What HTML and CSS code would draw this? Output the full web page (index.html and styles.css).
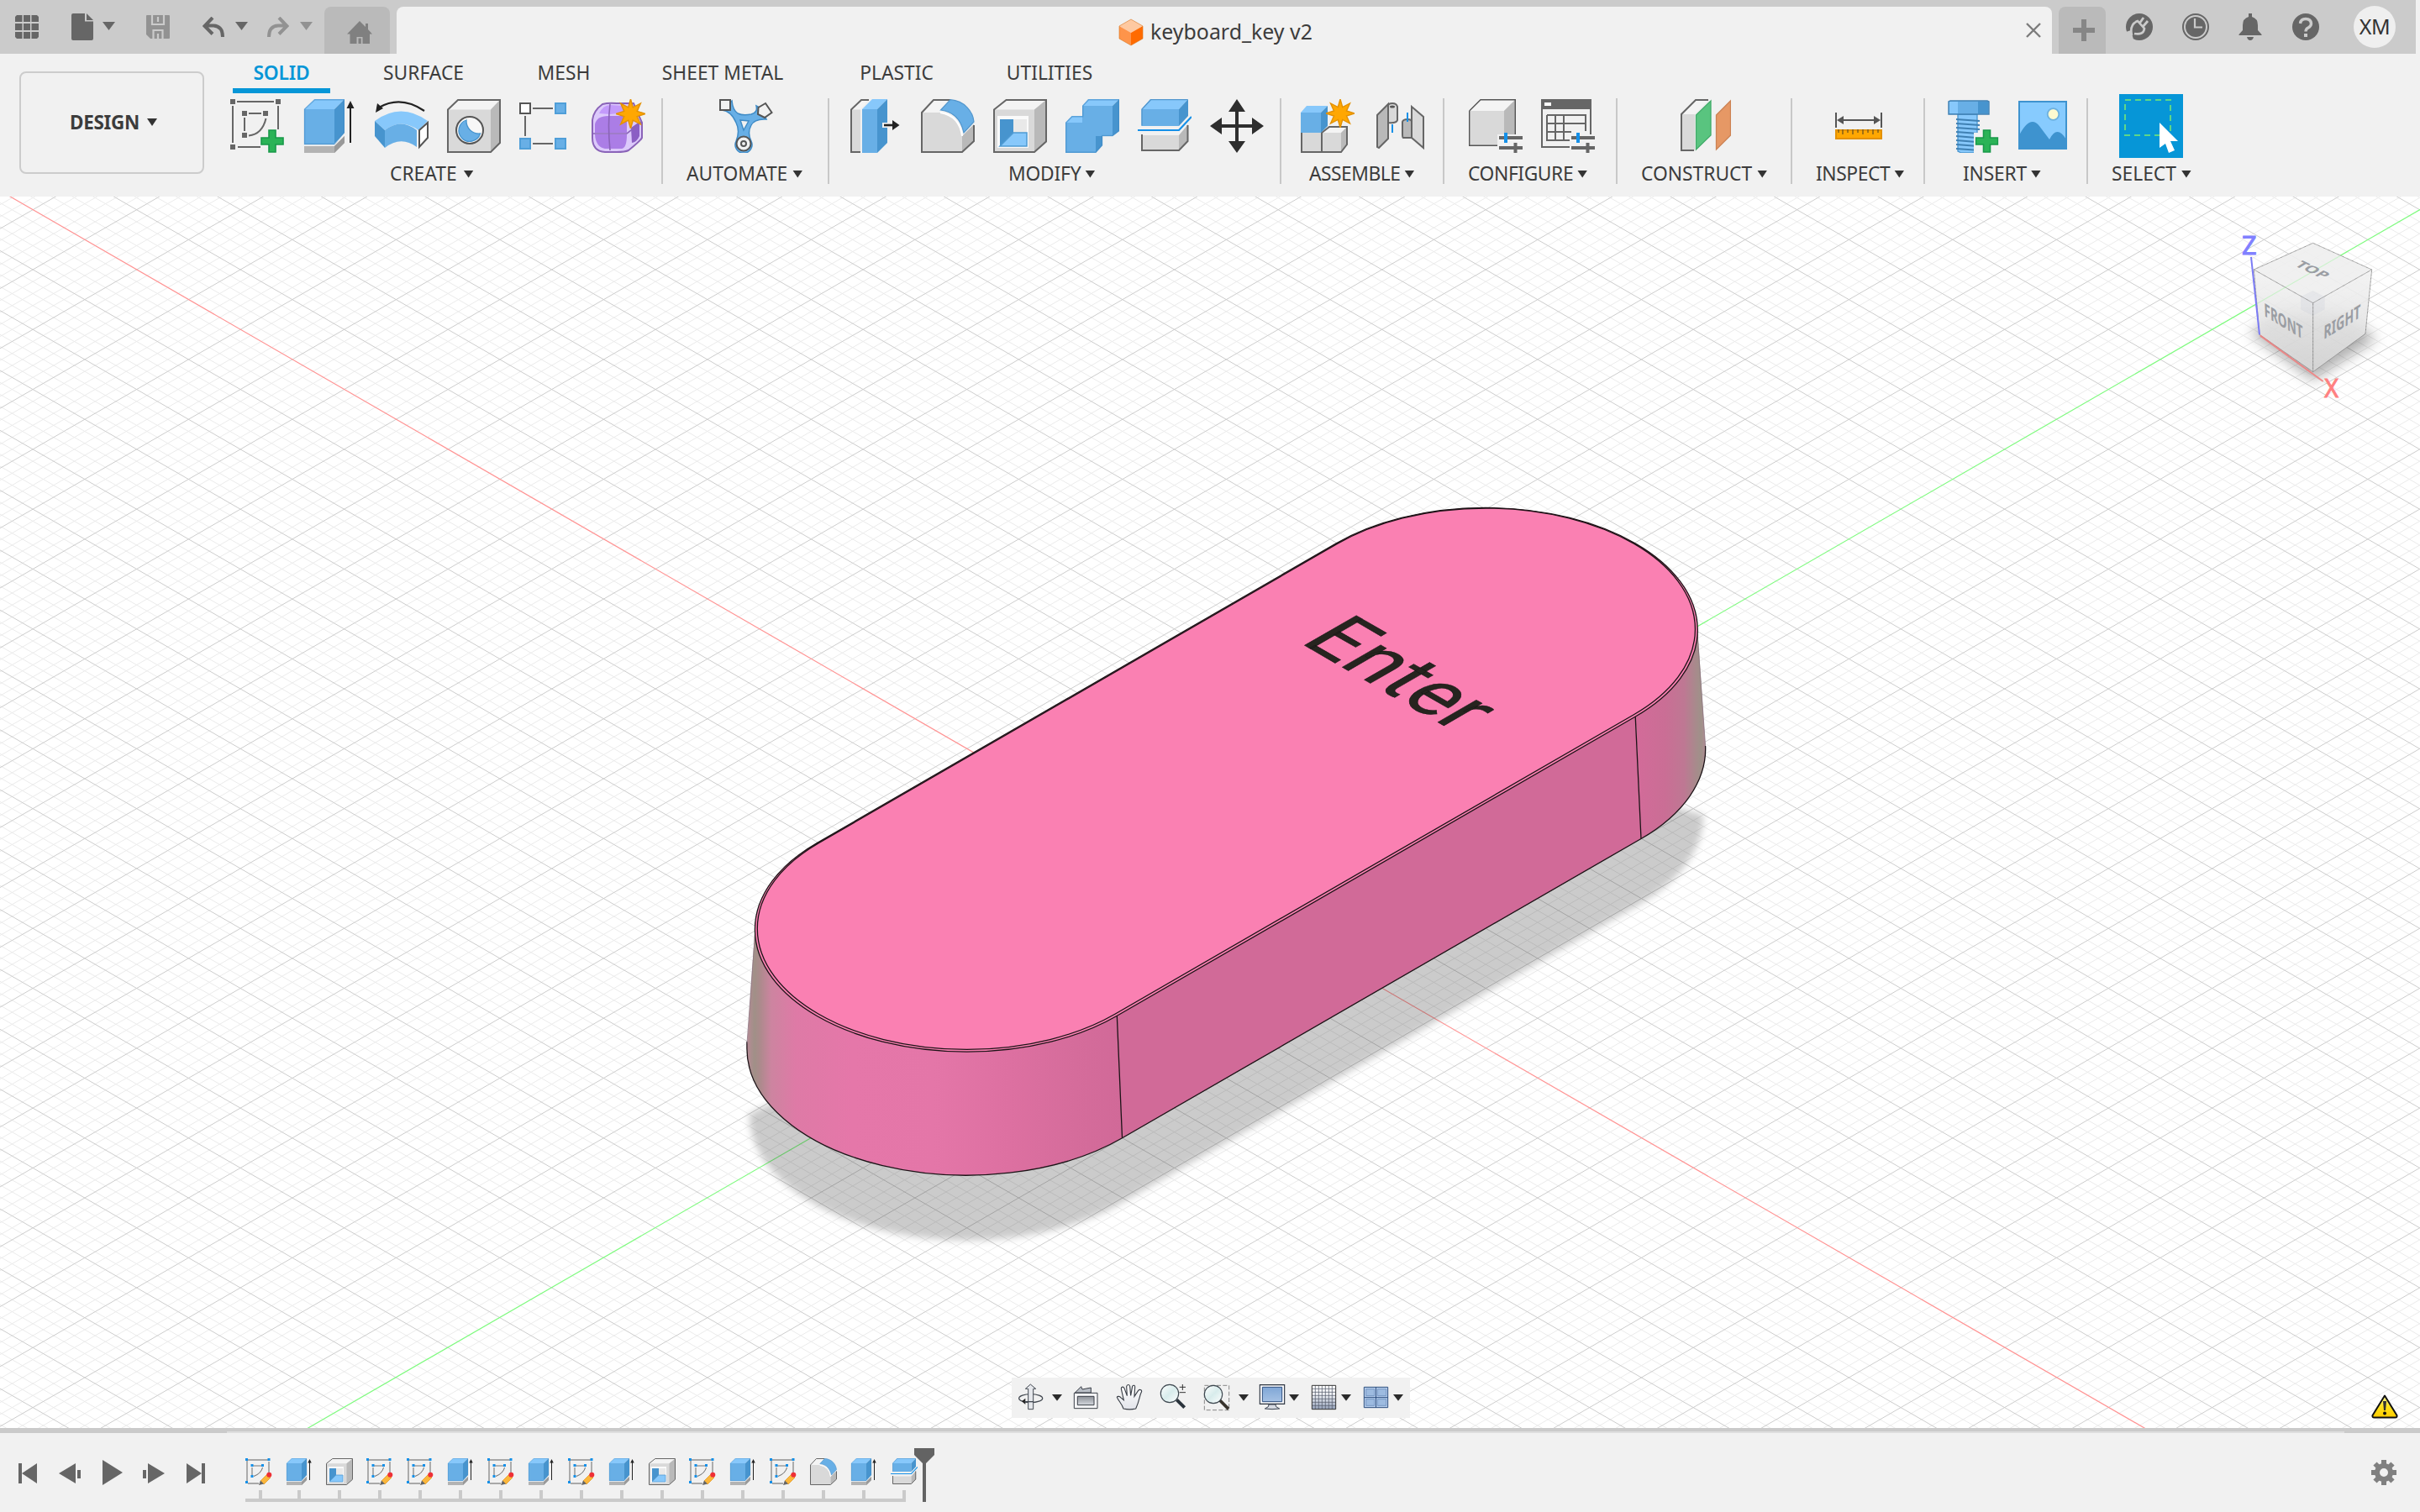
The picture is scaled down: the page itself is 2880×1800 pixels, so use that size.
FILE: index.html
```html
<!DOCTYPE html>
<html lang="en">
<head>
<meta charset="utf-8">
<title>keyboard_key v2</title>
<link rel="stylesheet" href="styles.css">
</head>
<body>
<svg class="defs" width="0" height="0" aria-hidden="true">
  <defs>
    <linearGradient id="gLens" x1="0" y1="0" x2="1" y2="1"><stop offset="0" stop-color="#fff"/><stop offset=".5" stop-color="#d8ecec"/><stop offset="1" stop-color="#fff"/></linearGradient>
    <linearGradient id="gBlue" x1="0" y1="0" x2="0" y2="1"><stop offset="0" stop-color="#7fa6d6"/><stop offset="1" stop-color="#a5c1e4"/></linearGradient>
    <linearGradient id="gGrid" x1="0" y1="0" x2="0" y2="1"><stop offset="0" stop-color="#fff"/><stop offset=".4" stop-color="#eef0f4"/><stop offset="1" stop-color="#93a0b8"/></linearGradient>
    <linearGradient id="gGray" x1="0" y1="0" x2="0" y2="1"><stop offset="0" stop-color="#8b8f96"/><stop offset="1" stop-color="#d5d8de"/></linearGradient>
    <linearGradient id="gHand" x1="0" y1="0" x2="0" y2="1"><stop offset="0" stop-color="#fff"/><stop offset="1" stop-color="#e2e4ea"/></linearGradient>
    <linearGradient id="gWarn" x1="0" y1="0" x2="0" y2="1"><stop offset="0" stop-color="#fff7a0"/><stop offset=".5" stop-color="#ffe21a"/><stop offset="1" stop-color="#ffcc00"/></linearGradient>
    <symbol id="extrude" viewBox="0 0 64 64">
      <path d="M2 56H38L50 44V52L38 64H2Z" fill="#b3b3b3"/><path d="M38 56L50 44V52L38 64Z" fill="#999"/>
      <path d="M2 12H38V54H2Z" fill="#68afe6"/><path d="M2 12L14.500 0H50L38 12Z" fill="#87c8fb"/><path d="M38 12L50 0V40L38 53Z" fill="#4794ce"/>
      <path d="M2.500 53.500V12L14.500 .700H49.300V40L38 53.500Z" fill="none" stroke="#3f8bc6" stroke-opacity=".55" stroke-width="1.400"/>
      <path d="M57 2L61.500 11H58V52H56V11H52.500Z" fill="#222"/>
    </symbol>
    <symbol id="shell" viewBox="0 0 64 64">
      <path d="M1 12.500L15.500 1H63V50.500L49 63H1Z" fill="#d9d9d9"/><path d="M1 12.500L15.500 1H63L49 12.500Z" fill="#f4f4f4"/><path d="M49 12.500L63 1V50.500L49 63Z" fill="#b9b9b9"/>
      <path d="M5 20H42V58H5Z" fill="#fafafa"/><path d="M24 24H40V40H24Z" fill="#e9e9e9"/><path d="M8 24H24V40L8 56Z" fill="#4794ce"/><path d="M24 40H40V56H8Z" fill="#87c8fb" stroke="#4d9ad3" stroke-width="1.500"/>
      <path d="M1 12.500L15.500 1H63V50.500L49 63H1Z" fill="none" stroke="#666" stroke-width="2"/>
    </symbol>
    <symbol id="fillet" viewBox="0 0 64 64">
      <path d="M1 16L15 1H33L23 16Z" fill="#f4f4f4"/><path d="M1 16H23Q46 20 49 44V63H1Z" fill="#d9d9d9"/><path d="M49 44L63 30V50L49 63Z" fill="#b9b9b9"/>
      <path d="M23 16Q46 20 49 44L49 44" fill="none" stroke="#fff" stroke-width="2"/>
      <path d="M35 1H15L1 16V63H49L63 50V31" fill="none" stroke="#666" stroke-width="2"/>
      <path d="M23.500 13L35 .700C52 2 62 15 63 27L51 40C48 26 40 15 23.500 13Z" fill="#68afe6" stroke="#5196cd" stroke-width="1.200"/>
    </symbol>
    <symbol id="split" viewBox="0 0 64 64">
      <path d="M5 43H49V61H5Z" fill="#d9d9d9"/><path d="M49 43L60 30V50L49 61Z" fill="#b9b9b9"/><path d="M5 42V61H49L59.500 50V31" fill="none" stroke="#666" stroke-width="2"/>
      <path d="M4.500 12H49V32H4.500Z" fill="#68afe6"/><path d="M4.500 12L15 0H60L49 12Z" fill="#87c8fb"/><path d="M49 12L60 0V20L49 32Z" fill="#4794ce"/>
      <path d="M5 31.500V12L15.500 .700H59.500" fill="none" stroke="#5196cd" stroke-width="1.300"/>
      <path d="M0 37H49L64 21" fill="none" stroke="#1590e8" stroke-width="2.200"/>
    </symbol>
    <symbol id="star" viewBox="0 0 34 34">
      <path d="M17 0L19.700 9.500L28.500 5L24.500 14L34 17L24.500 20L28.500 29L19.700 24.500L17 34L14.300 24.500L5.500 29L9.500 20L0 17L9.500 14L5.500 5L14.300 9.500Z" fill="#ffa702" stroke="#e39103" stroke-width="1.400"/>
    </symbol>
    <symbol id="plus" viewBox="0 0 28 28">
      <path d="M10 1H18V10H27V18H18V27H10V18H1V10H10Z" fill="#2bb357" stroke="#18994a" stroke-width="1.600"/>
    </symbol>
    <symbol id="sketch" viewBox="0 0 32 32">
      <path d="M3 2H27M3 30H16" stroke="#a8a8a8" stroke-width="2"/><path d="M2 3V28M28 4V17" stroke="#666" stroke-width="1"/>
      <path d="M9 9H19M8 11V20M20.500 11Q19 18 10 21.500" stroke="#777" fill="none" stroke-width="1.100"/>
      <path d="M0 0H3V3H0ZM26.500 0H29.500V3H26.500ZM0 27H3V30H0ZM6.500 7H9.500V10H6.500ZM19 7H22V10H19ZM6.500 20H9.500V23H6.500Z" fill="#1590e8"/>
      <path d="M18 27L26 19L30 23L22 31Z" fill="#fbb73c" stroke="#e69a25" stroke-width=".8"/><path d="M18 26.500L22 30.500L16 32Z" fill="#666"/><circle cx="28.300" cy="19.700" r="3" fill="#ee2f36"/>
    </symbol>
  </defs>
</svg>

<div class="app">
  <header class="titlebar">
    <div class="quick">
      <svg class="q-grid" width="28" height="28" viewBox="0 0 28 28"><path d="M2 0H8.500V8H0V2ZM10 0H18V8H10ZM19.500 0H26L28 2V8H19.500ZM0 10H8.500V18H0ZM10 10H18V18H10ZM19.500 10H28V18H19.500ZM0 20H8.500V28H2L0 26ZM10 20H18V28H10ZM19.500 20H28V26L26 28H19.500Z" fill="#666"/></svg>
      <svg class="q-file" width="26" height="32" viewBox="0 0 26 32"><path d="M2 0H16V9.500H26V30Q26 32 24 32H2Q0 32 0 30V2Q0 0 2 0ZM18 0L26 8H18Z" fill="#666"/></svg>
      <i class="caret big"></i>
      <svg class="q-save" width="28" height="28" viewBox="0 0 28 28"><path d="M1 0H27Q28 0 28 1V27Q28 28 27 28H5L0 23V1Q0 0 1 0Z" fill="#929292"/><path d="M7 0V11H21V0M8.500 28V18H19.500V28M14 2V8M14 22V28" fill="none" stroke="#cbcbcb" stroke-width="2.200"/></svg>
      <svg class="q-undo" width="26" height="25" viewBox="0 0 26 25"><path d="M12 1L2.500 11L12 20.500M3 10.500H13Q24 11 24 24" fill="none" stroke="#666" stroke-width="4"/></svg>
      <i class="caret big"></i>
      <svg class="q-redo" width="26" height="25" viewBox="0 0 26 25"><path d="M14 1L23.500 11L14 20.500M23 10.500H13Q2 11 2 24" fill="none" stroke="#929292" stroke-width="4"/></svg>
      <i class="caret big light"></i>
    </div>
    <div class="home-tab"><svg width="30" height="28" viewBox="0 0 30 28"><path d="M15 0L22 7V3H25V10L30 15.500H27V27H18.500V19H11.500V27H3.500V15.500H0ZM13.500 20.500H16.800V27H13.500Z" fill="#808080" fill-rule="evenodd"/></svg></div>
    <div class="doc-tab">
      <svg class="doc-cube" width="30" height="33" viewBox="0 0 30 33"><path d="M15 1L29 9L15 17L1 9Z" fill="#fec9a1"/><path d="M1 9L15 17V32L1 24Z" fill="#fe944a"/><path d="M29 9L15 17V32L29 24Z" fill="#ff6b00"/><path d="M15 1L29 9V24L15 32L1 24V9Z" fill="none" stroke="#d9771f" stroke-opacity=".6"/></svg>
      <span class="doc-name">keyboard_key v2</span>
      <svg class="doc-close" width="18" height="18" viewBox="0 0 18 18"><path d="M1 1L17 17M17 1L1 17" stroke="#7c7c7c" stroke-width="2.400"/></svg>
    </div>
    <div class="new-tab"><svg width="26" height="26" viewBox="0 0 26 26"><path d="M13 0V26M0 13H26" stroke="#868686" stroke-width="6"/></svg></div>
    <div class="account">
      <svg width="32" height="32" viewBox="0 0 32 32"><circle cx="16" cy="16" r="16" fill="#666"/><path d="M0 22L6 20L9 31L4 30Z" fill="#cbcbcb"/><path d="M7 26Q4 13 14 9L22 18Q21 26 10 24" fill="none" stroke="#cbcbcb" stroke-width="2.600"/><path d="M16 12L21 5M20 16L26 9" fill="none" stroke="#cbcbcb" stroke-width="2.800"/></svg>
      <svg width="34" height="34" viewBox="0 0 34 34"><circle cx="17" cy="17" r="15" fill="none" stroke="#666" stroke-width="2"/><circle cx="17" cy="17" r="12" fill="#666"/><path d="M16 7V17.500H25" fill="none" stroke="#cbcbcb" stroke-width="2.200"/></svg>
      <svg width="28" height="32" viewBox="0 0 28 32"><path d="M12 0H16V4Q23 6 23 14V20L27.500 25V26H.5V25L5 20V14Q5 6 12 4ZM10 28H18Q17 32 14 32T10 28Z" fill="#666"/></svg>
      <svg class="help" width="32" height="32" viewBox="0 0 32 32"><circle cx="16" cy="16" r="16" fill="#666"/><path d="M9.500 12Q10 6.500 16 6.500T22.500 12Q22.500 15 19 17Q16 18.500 16 21.500" fill="none" stroke="#cbcbcb" stroke-width="3.400"/><path d="M14 24H18V28H14Z" fill="#cbcbcb"/></svg>
      <span class="avatar">XM</span>
    </div>
  </header>

  <section class="ribbon">
    <div class="workspace">DESIGN<i class="caret"></i></div>
    <div class="ribbon-main">
      <nav class="tabs">
        <span class="tab active">SOLID</span><span class="tab t2">SURFACE</span><span class="tab t3">MESH</span><span class="tab t4">SHEET METAL</span><span class="tab t5">PLASTIC</span><span class="tab t6">UTILITIES</span>
      </nav>
      <div class="panels">
        <div class="panel create">
          <div class="icons">
            <svg viewBox="0 0 64 64"><path d="M0 0H6V6H0ZM54 0H60V6H54ZM0 54H6V60H0ZM14 14H20V20H14ZM39 14H45V20H39ZM14 40H20V46H14Z" fill="#666"/><path d="M8 3H52M3 8V52M57 8V36M9 57H36M22 17H37M17 22V38M42.500 23Q38 42 22 43.500" fill="none" stroke="#666" stroke-width="2"/><use href="#plus" x="36" y="36" width="28" height="28"/></svg>
            <svg><use href="#extrude"/></svg>
            <svg viewBox="0 0 64 64"><path d="M0 26Q31 3 63 26L52 37Q31 22 12 37Z" fill="#87c8fb"/><path d="M12 37Q31 22 50 37V57Q31 43 12 58Z" fill="#68afe6"/><path d="M0 26L12 37V58L0 44Z" fill="#4794ce"/><path d="M53 37L63 28V46L53 57Z" fill="#fff" stroke="#555" stroke-width="2"/><path d="M59 14Q31-5 5 10" fill="none" stroke="#222" stroke-width="2.200"/><path d="M1 16L3 5L10 11Z" fill="#222"/></svg>
            <svg viewBox="0 0 64 64"><path d="M1 12.500L13 1H63V52L52 63H1Z" fill="#d9d9d9"/><path d="M1 12.500L13 1H63L52 12.500Z" fill="#f4f4f4"/><path d="M52 12.500L63 1V52L52 63Z" fill="#b9b9b9"/><path d="M1 12.500L13 1H63V52L52 63H1Z" fill="none" stroke="#666" stroke-width="2"/><circle cx="27" cy="37" r="16" fill="#f7f7f7" stroke="#555" stroke-width="2"/><path d="M23 25A13 13 0 1 0 39.500 41A15 15 0 0 1 23 25Z" fill="#68afe6" stroke="#4794ce" stroke-width="1.300"/></svg>
            <svg viewBox="0 0 64 64"><path d="M16 11H40M16 53H40M7 20V44" stroke="#666" stroke-width="2"/><path d="M1 5H13V17H1Z" fill="#fff" stroke="#555" stroke-width="2"/><path d="M43 5H55V17H43ZM1 47H13V59H1ZM43 47H55V59H43Z" fill="#68afe6" stroke="#4f9ed8" stroke-width="2"/></svg>
            <svg viewBox="0 0 64 64"><path d="M1 25Q2 14 13 6Q20 4 30 5H50L60 28V46Q58 50 44 61Q40 63 30 63H16Q1 62 1 46Z" fill="#dcc9fb" stroke="#8a63b8" stroke-width="2"/><path d="M9 17Q14 7 22 7L40 8V16L22 18Z" fill="#c39afb"/><path d="M4 30Q6 20 20 20H42V40H4Z" fill="#ab7de6"/><path d="M4 42H42Q42 58 36 59H16Q5 57 4 42Z" fill="#ab7de6"/><path d="M47 34L57 27V44Q54 51 48 52Z" fill="#8b5fc4"/><path d="M22 6Q19 30 22 61M1 41H42L60 27" fill="none" stroke="#8a63b8" stroke-width="1.600"/><use href="#star" x="29" y="0" width="35" height="35"/></svg>
          </div>
          <div class="label">CREATE<i class="caret"></i></div>
        </div>
        <div class="panel automate">
          <div class="icons">
            <svg viewBox="0 0 64 64"><path d="M3 13Q14 14 20 28Q25 38 20 50A10 10 0 1 0 38 50Q33 40 38 31Q42 23 56 24L48 10L44 8Q46 16 38 18Q28 20 22 17Q16 13 15 2Z" fill="#68afe6" stroke="#3f8bc6" stroke-width="1.500"/><path d="M25 25L35 26L29 37Z" fill="#f1f1f1" stroke="#3f8bc6" stroke-width="1.500"/><path d="M1 1H13V13H1Z" fill="#f1f1f1" stroke="#555" stroke-width="2"/><path d="M55 5L62.500 16L54 22L46 18L46.500 10Z" fill="#f1f1f1" stroke="#555" stroke-width="2"/><circle cx="29" cy="53" r="8.500" fill="#f1f1f1" stroke="#555" stroke-width="2"/><circle cx="29" cy="53" r="3" fill="none" stroke="#555" stroke-width="2"/></svg>
          </div>
          <div class="label">AUTOMATE<i class="caret"></i></div>
        </div>
        <div class="panel modify">
          <div class="icons">
            <svg class="press" viewBox="0 0 62 64"><path d="M1 12.500L13 1H22L12 12V63H1Z" fill="#d9d9d9"/><path d="M1 12.500L13 1H22L12 12.500Z" fill="#f4f4f4"/><path d="M12 63H1V12.500L13 1H22" fill="none" stroke="#666" stroke-width="2"/><path d="M14 12H32V64H14Z" fill="#68afe6"/><path d="M14 12L26 0H44L32 12Z" fill="#87c8fb"/><path d="M32 12L44 0V52L32 64Z" fill="#4794ce"/><path d="M38 28H50V25L60 31L50 37V34H38Z" fill="#f1f1f1"/><path d="M40 31H52" stroke="#222" stroke-width="2.600"/><path d="M50 25L58.500 31L50 37Z" fill="#222"/></svg>
            <svg><use href="#fillet"/></svg>
            <svg><use href="#shell"/></svg>
            <svg viewBox="0 0 64 64"><path d="M0 28H20V8H56V44H36V64H0Z" fill="#68afe6"/><path d="M0 28L7.500 20H20V28ZM20 8L27 0H64L56 8Z" fill="#87c8fb"/><path d="M56 8L64 0V38L56 44ZM36 44H44V55L36 64Z" fill="#4794ce"/><path d="M.7 63.300V28L8 20.700H20.700V8L27.500 .7H63.300V38L56 43.500H43.500V55L36 63.300Z" fill="none" stroke="#3f8bc6" stroke-opacity=".6" stroke-width="1.400"/></svg>
            <svg><use href="#split"/></svg>
            <svg viewBox="0 0 64 64"><path d="M30 14H34V30H50V22L64 32L50 42V34H34V50H42L32 64L22 50H30V34H14V42L0 32L14 22V30H30V15H22L32 0L42 15H34" fill="#2e2e2e"/></svg>
          </div>
          <div class="label">MODIFY<i class="caret"></i></div>
        </div>
        <div class="panel assemble">
          <div class="icons">
            <svg viewBox="0 0 64 64"><path d="M1 40H49V63H1Z" fill="#d9d9d9"/><path d="M26 40L32 33H55L48 40Z" fill="#f4f4f4"/><path d="M48 40L55 33V54L48 63Z" fill="#b9b9b9"/><path d="M1 40V63H48L55 54V33H34L25 40V63" fill="none" stroke="#666" stroke-width="2"/><path d="M0 16H24V40H0Z" fill="#68afe6"/><path d="M0 16L7 8H32L24 16Z" fill="#87c8fb"/><path d="M24 16L32 8V32L24 40Z" fill="#4794ce"/><use href="#star" x="30" y="0" width="34" height="34"/></svg>
            <svg viewBox="0 0 64 64"><path d="M5 19L18 6V47L7 58L5 57Z" fill="#b9b9b9" stroke="#666" stroke-width="2"/><path d="M18 8Q18 5 23 5T29 9V25Q28 29 18 28Z" fill="#d9d9d9" stroke="#666" stroke-width="2"/><ellipse cx="23" cy="9" rx="3" ry="1.500" fill="#555"/><path d="M23 30V40" stroke="#1590e8" stroke-width="2"/><path d="M46 9L60 21V58L46 46Z" fill="#d9d9d9" stroke="#666" stroke-width="2"/><path d="M35 27Q36 24 41 24T46 27V46H36Q35 46 35 42Z" fill="#b9b9b9" stroke="#666" stroke-width="2"/><path d="M41 16V27" stroke="#1590e8" stroke-width="2"/></svg>
          </div>
          <div class="label">ASSEMBLE<i class="caret"></i></div>
        </div>
        <div class="panel configure">
          <div class="icons">
            <svg viewBox="0 0 64 64"><path d="M.7 14L14 .7H55.300V44L42 55.300H.7Z" fill="#d9d9d9"/><path d="M.7 14L14 .7H55.300L42 14Z" fill="#f4f4f4"/><path d="M42 14L55.300 .7V44L42 55.300Z" fill="#b9b9b9"/><path d="M.7 14L14 .7H55.300V44M42 55.300H.7V14" fill="none" stroke="#555" stroke-width="1.400"/><path d="M34 42H64V64H34Z" fill="#f1f1f1"/><path d="M36 46H64M36 58H64M55.500 52V64" stroke="#666" stroke-width="4"/><path d="M44 40V52" stroke="#1590e8" stroke-width="4"/></svg>
            <svg viewBox="0 0 64 64"><path d="M0 0H60V12H0Z" fill="#666"/><path d="M4 4H12V8H4Z" fill="#fff"/><path d="M1 12V57H34M59 12V42M7 19H53V38M7 19V49H34M7 29H53M7 39H36M17 19V49M27 19V49" fill="none" stroke="#666" stroke-width="2"/><path d="M36 46H64M36 58H64M55.500 52V64" stroke="#666" stroke-width="4"/><path d="M44 40V52" stroke="#1590e8" stroke-width="4"/></svg>
          </div>
          <div class="label">CONFIGURE<i class="caret"></i></div>
        </div>
        <div class="panel construct">
          <div class="icons">
            <svg viewBox="0 0 64 64"><path d="M5 18L22 1H38L21 18V61H5Z" fill="#d9d9d9"/><path d="M5 18L22 1H38L21 18Z" fill="#f4f4f4"/><path d="M20 61H5V18L22 1H37" fill="none" stroke="#666" stroke-width="2"/><path d="M22.500 19L40 2V43L22.500 60Z" fill="#59c47f" stroke="#41ab69" stroke-width="1.300"/><path d="M46.500 19L63.500 2V43L46.500 60Z" fill="#e69865" stroke="#cc8354" stroke-width="1.300"/></svg>
          </div>
          <div class="label">CONSTRUCT<i class="caret"></i></div>
        </div>
        <div class="panel inspect">
          <div class="icons">
            <svg viewBox="0 0 64 64"><path d="M5 16V34M59 16V34M10 25H54" stroke="#555" stroke-width="2"/><path d="M6 25L14 20V30ZM58 25L50 20V30Z" fill="#555"/><path d="M5 37H59V47H5Z" fill="#ffa702" stroke="#e39103" stroke-width="2"/><path d="M8 36V40M13 36V42M19 36V40M25 36V42M31 36V40M37 36V42M43 36V40M49 36V42M55 36V40" stroke="#7a5a1c" stroke-width="1.400"/></svg>
          </div>
          <div class="label">INSPECT<i class="caret"></i></div>
        </div>
        <div class="panel insert">
          <div class="icons">
            <svg viewBox="0 0 64 64"><path d="M12 18H35V62L31 64H16L12 62Z" fill="#87c8fb" stroke="#4794ce" stroke-width="1.300"/><path d="M10 24L38 26M10 29L38 31M10 34L38 36M10 39L36 41M10 44L34 46M10 49L34 51M10 54L36 56M10 59L38 61" stroke="#3f80b3" stroke-width="1.800"/><path d="M1 3L3 2H47L49 3V18H1Z" fill="#68afe6" stroke="#3f80b3" stroke-width="1.400"/><path d="M2 3H12V17H2Z" fill="#87c8fb"/><path d="M36 3H48V17H36Z" fill="#4794ce"/><path d="M31 40H44V64H31Z" fill="#f1f1f1"/><use href="#plus" x="32.500" y="36" width="28" height="28"/></svg>
            <svg viewBox="0 0 64 64"><path d="M1 3H57V59H1Z" fill="#87cbfe" stroke="#3e93cf" stroke-width="2"/><path d="M1 43Q14 18 25 32L37 48Q46 30 57 48V59H1Z" fill="#3e93cf"/><circle cx="41.500" cy="18" r="6.800" fill="#fdfad0" stroke="#6db1de" stroke-width="1.800"/></svg>
          </div>
          <div class="label">INSERT<i class="caret"></i></div>
        </div>
        <div class="panel select">
          <div class="icons">
            <svg viewBox="0 0 76 76"><path d="M0 0H76V76H0Z" fill="#0696d7"/><path d="M7 7H61V49H7Z" fill="none" stroke="#5fd687" stroke-width="2" stroke-dasharray="7 5"/><path d="M48 34V64L55 59L59 70L66 67L61 56H70Z" fill="#fff"/></svg>
          </div>
          <div class="label">SELECT<i class="caret"></i></div>
        </div>
      </div>
    </div>
  </section>

  <main class="canvas">
    <svg class="scene" viewBox="0 234 2880 1466" width="2880" height="1466">
      <defs>
        <linearGradient id="sideL" gradientUnits="userSpaceOnUse" x1="889" y1="0" x2="1334" y2="0">
          <stop offset="0" stop-color="#b78a96"/><stop offset=".02" stop-color="#a09087"/><stop offset=".035" stop-color="#ac8a8c"/><stop offset=".065" stop-color="#cd84a0"/><stop offset=".13" stop-color="#de7aa6"/><stop offset=".28" stop-color="#e577a9"/><stop offset=".5" stop-color="#e476a8"/><stop offset=".7" stop-color="#dd70a1"/><stop offset=".88" stop-color="#d56c9b"/><stop offset="1" stop-color="#d16998"/>
        </linearGradient>
        <linearGradient id="sideR" gradientUnits="userSpaceOnUse" x1="1950" y1="0" x2="2030" y2="0">
          <stop offset="0" stop-color="#d26b99"/><stop offset=".4" stop-color="#ca6e95"/><stop offset=".68" stop-color="#be7893"/><stop offset=".85" stop-color="#a88a8c"/><stop offset=".93" stop-color="#9f9189"/><stop offset="1" stop-color="#b08b94"/>
        </linearGradient>
        <linearGradient id="cubeShade" x1="0" y1="0" x2="0" y2="1"><stop offset="0" stop-color="#f3f3f3"/><stop offset="1" stop-color="#d9d9d9"/></linearGradient>
        <filter id="soft" x="-10%" y="-10%" width="120%" height="120%"><feGaussianBlur stdDeviation="4"/></filter>
        <filter id="soft2" x="-40%" y="-40%" width="180%" height="180%"><feGaussianBlur stdDeviation="24"/></filter>
      </defs>
      <path id="minor" class="minor"/><path id="major" class="major"/>
      <path class="axis-x" d="M-100 169.300L2880 1889.300"/>
      <path class="axis-y" d="M300 1738.500L2980 191.800"/>
      <path d="M891.600 1326A259 150 0 0 0 1334 1432.500L1951.600 1076.200A259 150 0 0 0 2027 970L1768 900L1150 1200Z" fill="#000" fill-opacity=".205" filter="url(#soft)"/>
      <path d="M898.400 1106L889.100 1244A261.500 151 0 0 0 1335.500 1354.800L1329 1200L1100 1040Z" fill="url(#sideL)"/>
      <path d="M1329 1205L1335.500 1354.800L1953 998.500L1946 840Z" fill="#d16a98"/>
      <path d="M1946 840L1953 998.500A261.500 151 0 0 0 2029.600 888L2020 745L1900 760Z" fill="url(#sideR)"/>
      <path class="edge" d="M888.900 1240V1248A261.500 151 0 0 0 1335.500 1354.800L1953 998.500A261.500 151 0 0 0 2029.600 888"/>
      <path class="edge faint" d="M2020 755L2029.600 888M898.500 1112L889 1242"/>
      <path class="edge" d="M1329.300 1209L1335.500 1354.500M1946.200 852.500L1953 998.300"/>
      <rect class="rim" transform="matrix(61.75 35.65 61.75 -35.65 1459.350 928.300)" x="-2.888" y="-7.888" width="5.776" height="15.776" rx="2.888"/>
      <rect class="rim" transform="matrix(61.75 35.65 61.75 -35.65 1459.350 927.200)" x="-2.855" y="-7.855" width="5.710" height="15.710" rx="2.855"/>
      <text transform="matrix(.8080 .4662 -.8685 .5010 1545.800 764.400)" class="engraving">Enter</text>

      <g transform="translate(2600 240) scale(.33333)">
        <path d="M235 470L458 640L685 490L560 400L330 400Z" fill="#000" fill-opacity=".3" filter="url(#soft2)"/>
        <g opacity=".88">
          <path d="M247 243L458 148L668 243L458 362Z" fill="#efefef"/>
          <path d="M247 243L458 362V608L267 475Z" fill="url(#cubeShade)"/>
          <path d="M458 362L668 243L645 472L458 608Z" fill="url(#cubeShade)"/>
        </g>
        <path d="M458 318L500 340V385L458 408L414 385V340Z" fill="#c8ccd6" fill-opacity=".25"/>
        <path d="M247 243L458 148L668 243L645 472L458 608L267 475Z M247 243L458 362L668 243M458 362V608" fill="none" stroke="#777" stroke-width="2.500" stroke-dasharray="3 1"/>
        <path d="M80 467L840 30" stroke="#80ff80" stroke-opacity=".25" stroke-width="3"/>
        <text transform="matrix(.85 .40 -.66 .41 390 228)" class="face" font-size="62">TOP</text>
        <text transform="matrix(.62 .375 .04 1 284 408)" class="face" font-size="66">FRONT</text>
        <text transform="matrix(.64 -.39 -.02 1 496 493)" class="face" font-size="66">RIGHT</text>
        <path d="M237 198L267 475" stroke="#7b7bf5" stroke-width="6"/>
        <path d="M269 478L494 642" stroke="#f07c7c" stroke-opacity=".85" stroke-width="6"/>
        <text x="204" y="189" font-size="92" fill="#8080ff" stroke="#8080ff" stroke-width="3" class="ax">Z</text>
        <text x="499" y="698" font-size="92" fill="#ff8080" stroke="#ff8080" stroke-width="3" class="ax" textLength="50" lengthAdjust="spacingAndGlyphs">X</text>
      </g>
    </svg>

    <div class="navbar">
      <svg width="66" height="48" viewBox="72 30 198 144"><ellipse cx="140" cy="104" rx="42" ry="15" fill="none" stroke="#444a52" stroke-width="4"/><path d="M131 143V70H121L139 54L158 70H149V143Z" fill="#e6e8ec" stroke="#444a52" stroke-width="3"/><path d="M108 115L121 104V126Z" fill="#222"/><path d="M118 116H150" stroke="#444a52" stroke-width="4"/><path class="nc" d="M216 90H252L234 113Z"/></svg>
      <svg width="45" height="48" viewBox="270 30 135 144"><path d="M298 84L320 62L324 72L355 66V84Z" fill="#b9bec6" stroke="#3a3f47" stroke-width="3"/><path d="M295 85H378V140H295Z" fill="#f6f6f8" stroke="#3a3f47" stroke-width="3"/><path d="M307 97H366V128H307Z" fill="url(#gGray)" stroke="#3a3f47" stroke-width="3"/></svg>
      <svg width="55" height="48" viewBox="405 30 165 144"><path d="M471 141C465 122 452 112 448 100C450 95 458 97 461 101L472 110L463 70C463 62 471 61 474 68L484 95L482 62C484 53 492 54 494 61L497 94L503 61C507 55 513 58 512 64L510 97L524 76C530 70 539 76 535 82C528 95 528 115 515 141Q493 146 471 141Z" fill="url(#gHand)" stroke="#3a3f47" stroke-width="3.400"/></svg>
      <svg width="55" height="48" viewBox="570 30 165 144"><path d="M661 109L689 137" stroke="#2b343c" stroke-width="12"/><circle cx="636" cy="87" r="32" fill="url(#gLens)" stroke="#3e4850" stroke-width="3.400"/><path d="M671 64H693M682 54V75M671 83H693" stroke="#333" stroke-width="3"/></svg>
      <svg width="65" height="48" viewBox="735 30 195 144"><path d="M760 58H848V146H760Z" fill="none" stroke="#777" stroke-width="2.600" stroke-dasharray="15 7"/><path d="M815 111L846 142" stroke="#38332c" stroke-width="11"/><circle cx="792" cy="90" r="32" fill="url(#gLens)" stroke="#3e4850" stroke-width="3.400"/><path class="nc" d="M882 90H918L900 113Z"/></svg>
      <svg width="60" height="48" viewBox="930 30 180 144"><path d="M958 56H1046V124H958Z" fill="#fbfbfd" stroke="#2c3440" stroke-width="3.400"/><path d="M967 64H1037V116H967Z" fill="url(#gBlue)" stroke="#2b4d7e" stroke-width="3"/><path d="M990 126H1014L1016 134L1028 141Q1002 145 976 141L988 134Z" fill="#d6dae2" stroke="#3a4250" stroke-width="3"/><path class="nc" d="M1062 90H1098L1080 113Z"/></svg>
      <svg width="63" height="48" viewBox="1110 30 189 144"><path d="M1144 58H1229V143H1144Z" fill="url(#gGrid)"/><path d="M1156 58V143M1168 58V143M1180 58V143M1192 58V143M1204 58V143M1216 58V143M1144 70H1229M1144 82H1229M1144 94H1229M1144 106H1229M1144 118H1229M1144 130H1229" stroke="#555c6a" stroke-width="2.200"/><path d="M1144 58H1229V143H1144Z" fill="none" stroke="#333" stroke-width="3"/><path class="nc" d="M1248 90H1284L1266 113Z"/></svg>
      <svg width="65" height="48" viewBox="1299 30 195 144"><path d="M1330 64H1415V137H1330Z" fill="#b5cceb" stroke="#2b4d7e" stroke-width="3"/><path d="M1337 71H1367V95H1337ZM1378 71H1409V95H1378ZM1337 107H1367V130H1337ZM1378 107H1409V130H1378Z" fill="#9dbbe0" stroke="#5f83b3" stroke-width="2"/><path d="M1372.500 64V137M1330 101H1415" stroke="#2b4d7e" stroke-width="3"/><path class="nc" d="M1434 90H1470L1452 113Z"/></svg>
    </div>
    <svg class="warning" width="32" height="29" viewBox="0 0 32 29"><path d="M16 1.500L30.500 25Q31 27.500 28.500 27.500H3.500Q1 27.500 1.500 25Z" fill="url(#gWarn)" stroke="#111" stroke-width="2" stroke-linejoin="round"/><path d="M14 8H18L17 19H15Z" fill="#333"/><circle cx="16" cy="22.500" r="2" fill="#111"/></svg>
  </main>

  <footer class="timeline">
    <div class="rule"></div>
    <div class="strip">
      <div class="playback">
        <svg width="228" height="30" viewBox="18 0 228 30"><path d="M22 4H26V28H22ZM44 4V28L26 16ZM90 4V28L70 16ZM92 12H96V22H92ZM122 0L146 15L122 30ZM170 12H174V22H170ZM176 4L196 16L176 28ZM222 4L240 16L222 28ZM240 4H244V28H240Z" fill="#666"/></svg>
      </div>
      <div class="features">
        <div class="feature"><svg><use href="#sketch"/></svg></div>
        <div class="feature"><svg><use href="#extrude"/></svg></div>
        <div class="feature"><svg><use href="#shell"/></svg></div>
        <div class="feature"><svg><use href="#sketch"/></svg></div>
        <div class="feature"><svg><use href="#sketch"/></svg></div>
        <div class="feature"><svg><use href="#extrude"/></svg></div>
        <div class="feature"><svg><use href="#sketch"/></svg></div>
        <div class="feature"><svg><use href="#extrude"/></svg></div>
        <div class="feature"><svg><use href="#sketch"/></svg></div>
        <div class="feature"><svg><use href="#extrude"/></svg></div>
        <div class="feature"><svg><use href="#shell"/></svg></div>
        <div class="feature"><svg><use href="#sketch"/></svg></div>
        <div class="feature"><svg><use href="#extrude"/></svg></div>
        <div class="feature"><svg><use href="#sketch"/></svg></div>
        <div class="feature"><svg><use href="#fillet"/></svg></div>
        <div class="feature"><svg><use href="#extrude"/></svg></div>
        <div class="feature"><svg><use href="#split"/></svg></div>
        <svg class="marker" width="24" height="64" viewBox="0 0 24 64"><path d="M0 0H24V8L14 18V64H10V18L0 8Z" fill="#636363"/></svg>
      </div>
      <svg class="gear" width="30" height="30" viewBox="-15 -15 30 30"><circle r="8" fill="none" stroke="#808080" stroke-width="6"/><path d="M0-15V-9M0 9V15M-15 0H-9M9 0H15M-10.500-10.500L-6.500-6.500M10.500-10.500L6.500-6.500M-10.500 10.500L-6.500 6.500M10.500 10.500L6.500 6.500" stroke="#808080" stroke-width="6"/></svg>
    </div>
  </footer>
</div>
<script src="grid.js"></script>
</body>
</html>
```
FILE: styles.css
```css
* { box-sizing: border-box; }
body { margin: 0; background: #f1f1f1; color: #3c3c3c; font-family: "Noto Sans", "Open Sans", sans-serif; }
svg { display: block; flex: none; }
.defs { position: absolute; }
.app { width: 2880px; height: 1800px; display: flex; flex-direction: column; overflow: hidden; }

.caret { display: inline-block; flex: none; width: 12px; height: 9px; background: #333; clip-path: polygon(0 0, 100% 0, 50% 100%); }
.caret.big { width: 15px; height: 10px; background: #666; }
.caret.light { background: #929292; }

/* title bar */
.titlebar { height: 64px; width: 2875px; background: #cbcbcb; display: flex; align-items: flex-start; }
.quick { width: 386px; height: 64px; padding-left: 18px; display: flex; align-items: center; }
.quick .caret { margin-bottom: 2px; }
.q-file { margin-left: 39px; margin-right: 11px; }
.q-save { margin-left: 37px; }
.q-undo { margin-left: 39px; margin-right: 13px; }
.q-redo { margin-left: 23px; margin-right: 13px; }
.home-tab { width: 78px; height: 56px; margin: 8px 8px 0 0; border-radius: 8px 8px 0 0; background: #bababa; padding: 17px 0 0 27px; }
.doc-tab { width: 1970px; height: 56px; margin-top: 8px; border-radius: 8px 8px 0 0; background: #f1f1f1; display: flex; align-items: center; padding: 0 13px 0 859px; }
.doc-cube { margin-top: 4px; }
.doc-name { margin: 2px 0 0 8px; font-size: 24.9px; line-height: 32px; white-space: nowrap; }
.doc-close { margin: 0 0 0 auto; }
.new-tab { width: 56px; height: 56px; margin: 8px 0 0 8px; border-radius: 8px 8px 0 0; background: #bababa; padding: 15px 0 0 17px; }
.account { height: 64px; flex: 1; display: flex; align-items: center; padding-left: 24px; gap: 34px; }
.help { margin-left: 2px; }
.avatar { width: 50px; height: 50px; margin-left: 7px; border-radius: 50%; background: #efefef; color: #333; font-size: 25px; line-height: 49px; text-align: center; letter-spacing: -.5px; }

/* ribbon */
.ribbon { height: 170px; display: flex; }
.workspace { width: 220px; height: 122px; margin: 21px 0 0 23px; border: 2px solid #ccc; border-radius: 8px; display: flex; align-items: center; padding: 0 0 1px 58px; gap: 9px; font-size: 22.5px; font-weight: 700; letter-spacing: -.3px; }
.ribbon-main { flex: 1; }
.tabs { height: 53px; padding-left: 34px; display: flex; }
.tab { width: 116px; height: 47px; padding-top: 7px; text-align: center; font-size: 22.8px; line-height: 32px; white-space: nowrap; }
.tab.active { color: #0696d7; font-weight: 600; letter-spacing: -.2px; border-bottom: 6px solid #0696d7; }
.t2 { margin-left: 53px; }
.t3 { margin-left: 51px; }
.t4 { margin-left: 44px; width: 174px; }
.t5 { margin-left: 62px; }
.t6 { margin-left: 66px; }
.panels { display: flex; }
.panel { height: 102px; border-right: 2px solid #c8c8c8; font-size: 22.8px; }
.panel .icons { height: 65px; padding-top: 1px; display: flex; gap: 22px; }
.panel .icons svg { width: 64px; height: 64px; }
.panel .icons svg.press { width: 62px; }
.label { height: 30px; margin-top: 10px; display: flex; align-items: center; gap: 5px; line-height: 30px; white-space: nowrap; }
.create { width: 546px; }
.create .icons { padding-left: 31px; }
.create .label { padding-left: 221px; gap: 8px; }
.automate { width: 198px; }
.automate .icons { padding-left: 67px; }
.automate .label { padding-left: 28px; gap: 6px; }
.modify { width: 538px; }
.modify .icons { padding-left: 25px; }
.modify .label { padding-left: 213px; letter-spacing: -.2px; }
.assemble { width: 194px; }
.assemble .icons { padding-left: 23px; }
.assemble .label { padding-left: 33px; letter-spacing: -.5px; }
.configure { width: 206px; }
.configure .icons { padding-left: 29px; }
.configure .label { padding-left: 28px; letter-spacing: -.4px; }
.construct { width: 208px; }
.construct .icons { padding-left: 71px; }
.construct .label { padding-left: 28px; gap: 6px; }
.inspect { width: 158px; }
.inspect .icons { padding-left: 47px; }
.inspect .label { padding-left: 28px; letter-spacing: -.4px; }
.insert { width: 194px; }
.insert .icons { padding-left: 27px; gap: 20px; }
.insert .label { padding-left: 45px; letter-spacing: -.2px; }
.select { width: 140px; border-right: 0; }
.select .icons { padding: 0 0 0 37px; }
.select .icons svg { width: 76px; height: 76px; margin-top: -5px; }
.select .label { padding-left: 28px; gap: 6px; }

/* canvas */
.canvas { position: relative; height: 1466px; background: #fff; }
.minor { fill: none; stroke: #ebebeb; stroke-width: 1; }
.major { fill: none; stroke: #cdcdcd; stroke-width: 1; }
.axis-x { stroke: #ff9494; stroke-width: 1.2; }
.axis-y { stroke: #80fa80; stroke-width: 1.2; }
.edge { fill: none; stroke: #1c1216; stroke-width: 1.3; }
.edge.faint { stroke: #8a7480; stroke-width: .8; }
.rim { fill: #fa80b2; stroke: #1c1216; stroke-width: 1.3; vector-effect: non-scaling-stroke; }
.engraving { font-family: Roboto, sans-serif; font-size: 100px; fill: #26241f; stroke: #111; stroke-width: .5; }
.face { font-weight: 700; fill: #9a9da3; }
.ax { font-family: "Noto Sans", sans-serif; }
.navbar { position: absolute; left: 1204px; top: 1406px; width: 474px; height: 48px; background: #f1f1f1; display: flex; }
.nc { fill: #2b2b2b; }
.warning { position: absolute; left: 2822px; top: 1426px; }

/* timeline */
.timeline { height: 100px; background: #f1f1f1; }
.rule { height: 6px; background: linear-gradient(#dedede, #dedede) 270px 4px / 2520px 2px no-repeat, #cacaca; }
.strip { height: 94px; display: flex; }
.playback { width: 292px; padding: 32px 0 0 18px; }
.features { display: flex; padding-top: 18px; }
.feature { width: 48px; height: 64px; padding-top: 12px; border-bottom: 4px solid #cacaca; background: linear-gradient(#cacaca, #cacaca) 14px 50px / 4px 10px no-repeat; }
.feature:first-child { background-position: 16px 50px; }
.feature:nth-child(17) { width: 18px; margin-right: 10px; }
.feature svg { width: 32px; height: 32px; }
.gear { margin: 32px 28px 0 auto; }
```
FILE: grid.js
```js
// Isometric ground grid: ten-millimetre cells split in five, centred on the model origin.
(function () {
  var ox = 1459.35, oy = 1069.6, w = 123.5, slope = 0.5773, parts = 5;
  var top = 230, bottom = 1704, minor = '', major = '';
  for (var k = -150; k <= 150; k++) {
    if (k === 0) continue;
    var x = ox + k * w / parts;
    [1, -1].forEach(function (s) {
      var d = 'M' + (x + s * (top - oy) / slope).toFixed(2) + ' ' + top +
              'L' + (x + s * (bottom - oy) / slope).toFixed(2) + ' ' + bottom;
      if (k % parts) minor += d; else major += d;
    });
  }
  document.getElementById('minor').setAttribute('d', minor);
  document.getElementById('major').setAttribute('d', major);
})();
```
